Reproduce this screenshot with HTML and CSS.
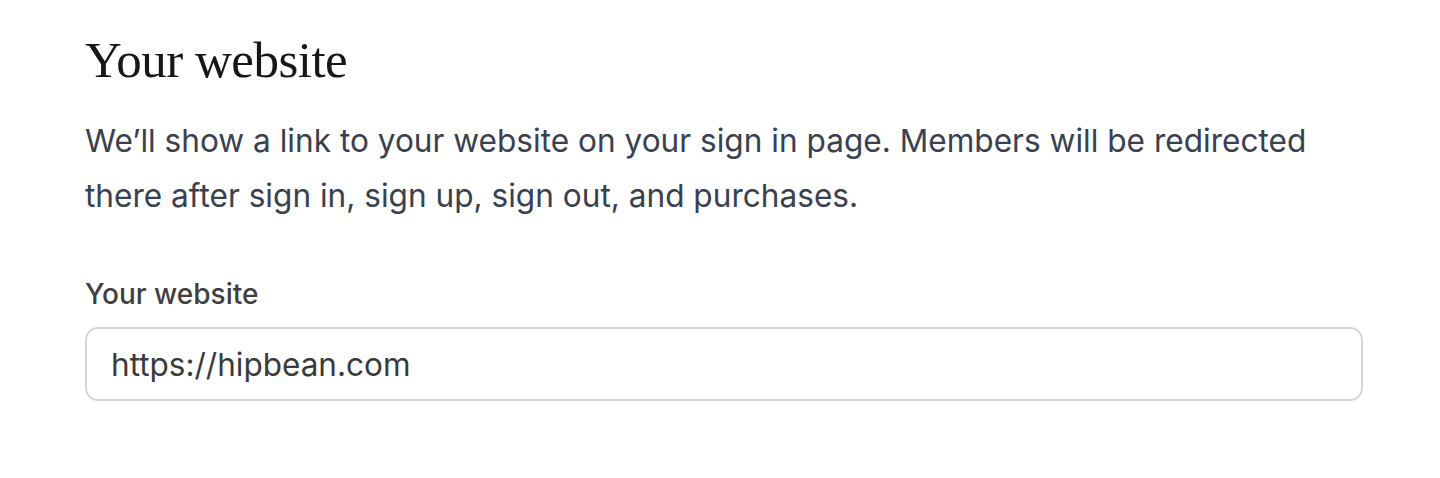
FILE: index.html
```html
<!DOCTYPE html>
<html lang="en">
<head>
<meta charset="utf-8">
<title>Your website</title>
<link rel="stylesheet" href="styles.css">
</head>
<body>
<main class="section">
  <h1 class="title">Your website</h1>
  <p class="desc">We’ll show a link to your website on your sign in page. Members will be redirected there after sign in, sign up, sign out, and purchases.</p>
  <div class="field">
    <label class="label" for="site">Your website</label>
    <input class="input" id="site" type="text" value="https://hipbean.com">
  </div>
</main>
</body>
</html>
```
FILE: styles.css
```css
html, body {
  margin: 0;
  padding: 0;
  background: #ffffff;
}
.section {
  width: 1278px;
  padding: 28px 0 0 85px;
  display: flex;
  flex-direction: column;
}
.title {
  margin: 0;
  font-family: "Liberation Serif", serif;
  font-weight: 400;
  font-size: 51px;
  line-height: 64px;
  letter-spacing: -0.5px;
  color: #15171a;
}
.desc, .label, .input {
  font-family: Inter, "Noto Sans", sans-serif;
}
.desc {
  margin: 21px 0 0;
  font-size: 31.6px;
  line-height: 55px;
  color: #394150;
}
.field {
  margin-top: 54px;
  display: flex;
  flex-direction: column;
  gap: 16px;
}
.label {
  font-size: 28px;
  font-weight: 500;
  line-height: 34px;
  color: #3f3f3f;
}
.input {
  box-sizing: border-box;
  width: 1278px;
  height: 74px;
  margin: 0;
  padding: 0 24px;
  border: 2px solid #d6d6d6;
  border-radius: 13px;
  background: #fff;
  font-size: 31.5px;
  color: #3a3a3a;
  outline: none;
}
```
